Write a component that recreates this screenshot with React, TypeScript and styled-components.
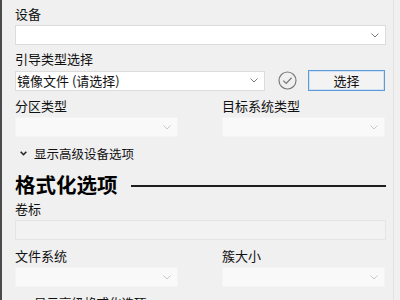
import React from "react";
import styled, { createGlobalStyle } from "styled-components";

const Global = createGlobalStyle`
  html, body { margin: 0; padding: 0; background: #f0f0f0; }
  body { font-family: "Noto Sans CJK SC", "Microsoft YaHei", sans-serif; }
`;

const Window = styled.div`
  width: 400px;
  height: 300px;
  box-sizing: border-box;
  background: #f0f0f0;
  border-left: 2px solid #4a4a4a;
  overflow: hidden;
`;

const Content = styled.div`
  box-sizing: border-box;
  width: 392px;
  min-height: 300px;
  padding: 5px 7px 0 13px;
  border-right: 1px solid #e2e2e2;
`;

const Label = styled.div<{ $mt?: number }>`
  font-size: 13px;
  line-height: 18px;
  height: 18px;
  color: #111;
  margin-top: ${(p) => p.$mt ?? 0}px;
  margin-bottom: 2px;
  white-space: nowrap;
`;

const Combo = styled.div<{ $disabled?: boolean; $width?: number }>`
  box-sizing: border-box;
  height: 20px;
  flex-shrink: 0;
  width: ${(p) => (p.$width ? `${p.$width}px` : "100%")};
  background: ${(p) => (p.$disabled ? "#f9f9f9" : "#ffffff")};
  border: 1px solid ${(p) => (p.$disabled ? "#f4f4f4" : "#dcdcdc")};
  display: flex;
  align-items: center;
  padding: 0 6px 0 1px;
  font-size: 13px;
  color: #111;
  white-space: nowrap;
`;

const ComboText = styled.span`
  flex: 1;
  line-height: 18px;
`;

const Chevron = ({ color }: { color: string }) => (
  <svg width="8" height="5" viewBox="0 0 8 5">
    <path d="M0.5 0.5 L4 4 L7.5 0.5" fill="none" stroke={color} strokeWidth="1" />
  </svg>
);

const Row = styled.div`
  display: flex;
  align-items: center;
`;

const TwoCol = styled.div`
  display: grid;
  grid-template-columns: 163px 163px;
  column-gap: 44px;
`;

const CheckWrap = styled.div`
  width: 19px;
  height: 19px;
  margin-left: 13px;
  display: flex;
`;

const Button = styled.div`
  box-sizing: border-box;
  width: 77px;
  height: 21px;
  margin-left: 11px;
  border: 1px solid #5d9ad6;
  box-shadow: inset 0 0 0 1px #cfe1f2;
  background: #f3f3f3;
  display: flex;
  align-items: center;
  justify-content: center;
  font-size: 13px;
  color: #111;
`;

const Toggle = styled.div<{ $mt?: number }>`
  display: flex;
  align-items: center;
  margin-top: ${(p) => p.$mt ?? 0}px;
  margin-left: 5px;
  height: 18px;
  font-size: 12.5px;
  color: #111;
  white-space: nowrap;
`;

const ToggleIcon = styled.svg`
  margin-right: 7px;
`;

const Heading = styled.div`
  display: flex;
  align-items: center;
  margin-top: 10px;
  height: 24px;
`;

const HeadingText = styled.span`
  font-size: 20.5px;
  font-weight: bold;
  color: #000;
  line-height: 24px;
  white-space: nowrap;
`;

const HeadingRule = styled.div`
  flex: 1;
  height: 2px;
  background: #1e1e1e;
  margin-left: 13px;
  margin-top: 3px;
`;

const Edit = styled.div`
  box-sizing: border-box;
  height: 20px;
  background: #f2f2f2;
  border: 1px solid #e4e4e4;
`;

const Field = styled.div``;

export default function App() {
  return (
    <>
      <Global />
      <Window>
        <Content>
          <Label>设备</Label>
          <Combo>
            <ComboText />
            <Chevron color="#7a7a7a" />
          </Combo>

          <Label $mt={5}>引导类型选择</Label>
          <Row>
            <Combo $width={250}>
              <ComboText>镜像文件 (请选择)</ComboText>
              <Chevron color="#7a7a7a" />
            </Combo>
            <CheckWrap>
              <svg width="19" height="19" viewBox="0 0 19 19">
                <circle cx="9.5" cy="9.5" r="8.5" fill="none" stroke="#7b7b7b" strokeWidth="1.2" />
                <path d="M5.3 9.6 L8.2 12.4 L13.6 6.8" fill="none" stroke="#7b7b7b" strokeWidth="1.3" />
              </svg>
            </CheckWrap>
            <Button>选择</Button>
          </Row>

          <TwoCol>
            <Field>
              <Label $mt={6}>分区类型</Label>
              <Combo $disabled>
                <ComboText />
                <Chevron color="#c8c8c8" />
              </Combo>
            </Field>
            <Field>
              <Label $mt={6}>目标系统类型</Label>
              <Combo $disabled>
                <ComboText />
                <Chevron color="#c8c8c8" />
              </Combo>
            </Field>
          </TwoCol>

          <Toggle $mt={7}>
            <ToggleIcon width="7" height="5" viewBox="0 0 7 5">
              <path d="M0.7 0.7 L3.5 3.7 L6.3 0.7" fill="none" stroke="#222" strokeWidth="1.6" />
            </ToggleIcon>
            显示高级设备选项
          </Toggle>

          <Heading>
            <HeadingText>格式化选项</HeadingText>
            <HeadingRule />
          </Heading>

          <Label $mt={4}>卷标</Label>
          <Edit />

          <TwoCol>
            <Field>
              <Label $mt={7}>文件系统</Label>
              <Combo $disabled>
                <ComboText />
                <Chevron color="#c8c8c8" />
              </Combo>
            </Field>
            <Field>
              <Label $mt={7}>簇大小</Label>
              <Combo $disabled>
                <ComboText />
                <Chevron color="#c8c8c8" />
              </Combo>
            </Field>
          </TwoCol>

          <Toggle $mt={6}>
            <ToggleIcon width="7" height="5" viewBox="0 0 7 5">
              <path d="M0.7 0.7 L3.5 3.7 L6.3 0.7" fill="none" stroke="#222" strokeWidth="1.6" />
            </ToggleIcon>
            显示高级格式化选项
          </Toggle>
        </Content>
      </Window>
    </>
  );
}
